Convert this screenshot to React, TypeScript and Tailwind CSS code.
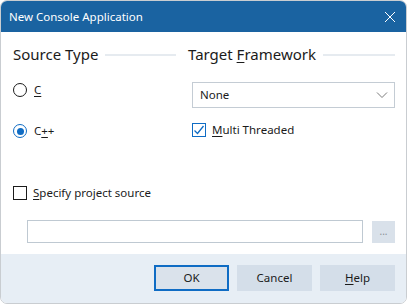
import React from "react";

const font = { fontFamily: '"Segoe UI", "Noto Sans", "Open Sans", sans-serif' };

const Radio: React.FC<{ checked?: boolean; children: React.ReactNode }> = ({ checked, children }) => (
  <div className="flex items-center gap-[7px] h-[16px]">
    <span
      className={
        "w-[14px] h-[14px] rounded-full border flex items-center justify-center " +
        (checked ? "border-[#0f6cc4]" : "border-[#1b1b1b]")
      }
    >
      {checked && <span className="w-[7px] h-[7px] rounded-full bg-[#0f6cc4]" />}
    </span>
    <span className="text-[11.5px] text-[#1b1b1b]">{children}</span>
  </div>
);

const CheckBox: React.FC<{ checked?: boolean; children: React.ReactNode }> = ({ checked, children }) => (
  <div className="flex items-center gap-[6px]">
    <span
      className={
        "w-[14px] h-[14px] border flex items-center justify-center " +
        (checked ? "border-[#0f6cc4]" : "border-[#1b1b1b]")
      }
    >
      {checked && (
        <svg width="12" height="12" viewBox="0 0 12 12">
          <path d="M1.5 6.5 L4.5 9.5 L10.5 2" fill="none" stroke="#0f6cc4" strokeWidth="1.3" />
        </svg>
      )}
    </span>
    <span className="text-[11.5px] text-[#1b1b1b]">{children}</span>
  </div>
);

const Heading: React.FC<{ children: React.ReactNode }> = ({ children }) => (
  <div className="flex items-center gap-[7px]">
    <span className="text-[15px] text-[#1b1b1b] whitespace-nowrap leading-[20px]">{children}</span>
    <span className="flex-1 h-[2px] bg-[#e6ebf0] mt-[1px]" />
  </div>
);

export default function App() {
  return (
    <div className="w-[408px] h-[305px] bg-white" style={font}>
      <div className="w-[407px] h-[304px] rounded-[7px] border border-[#c9cdd1] overflow-hidden flex flex-col">
        <div className="h-[31px] shrink-0 bg-[#1a63a1] flex items-center justify-between pl-[8px] pr-[10px]">
          <span className="text-white text-[11.5px]">New Console Application</span>
          <svg width="12" height="12" viewBox="0 0 12 12">
            <path d="M1 1 L11 11 M11 1 L1 11" stroke="white" strokeWidth="1" />
          </svg>
        </div>

        <div className="flex-1 bg-white pl-[12px] pr-[11px] pt-[12px]">
          <div className="flex gap-[12px]">
            <div className="w-[163px] flex flex-col">
              <Heading>Source Type</Heading>
              <div className="mt-[18px] flex flex-col gap-[25px]">
                <Radio>
                  <span className="underline underline-offset-2">C</span>
                </Radio>
                <Radio checked>
                  C<span className="underline underline-offset-2">+</span>+
                </Radio>
              </div>
            </div>
            <div className="flex-1 flex flex-col">
              <Heading>
                Target <span className="underline underline-offset-2">F</span>ramework
              </Heading>
              <div className="mt-[18px] ml-[4px] h-[26px] border border-[#c4ccd4] bg-white flex items-center justify-between pl-[7px] pr-[6px]">
                <span className="text-[11.5px] text-[#1b1b1b]">None</span>
                <svg width="12" height="8" viewBox="0 0 12 8">
                  <path d="M1 1.5 L6 6.5 L11 1.5" fill="none" stroke="#7a7a7a" strokeWidth="1" />
                </svg>
              </div>
              <div className="mt-[13px] ml-[4px]">
                <CheckBox checked>
                  <span className="underline underline-offset-2">M</span>ulti Threaded
                </CheckBox>
              </div>
            </div>
          </div>

          <div className="mt-[45px]">
            <CheckBox>
              <span className="underline underline-offset-2">S</span>pecify project source
            </CheckBox>
          </div>

          <div className="mt-[19px] ml-[14px] flex items-center gap-[9px]">
            <div className="flex-1 h-[23px] border border-[#bfc9d2] bg-white" />
            <div className="w-[23px] h-[22px] bg-[#d9e1ea] flex items-center justify-center text-[10px] text-[#8a8f95] leading-none pb-[2px]">
              ...
            </div>
          </div>
        </div>

        <div className="h-[49px] shrink-0 bg-[#e7eef5] flex items-center justify-end gap-[8px] pr-[11px] pb-[1px]">
          <button className="w-[75px] h-[26px] bg-[#dae2eb] border-2 border-[#0f6cc4] text-[11.5px] text-[#1b1b1b]">
            OK
          </button>
          <button className="w-[75px] h-[26px] bg-[#d4dee9] text-[11.5px] text-[#1b1b1b]">Cancel</button>
          <button className="w-[75px] h-[26px] bg-[#d4dee9] text-[11.5px] text-[#1b1b1b]">
            <span className="underline underline-offset-2">H</span>elp
          </button>
        </div>
      </div>
    </div>
  );
}
